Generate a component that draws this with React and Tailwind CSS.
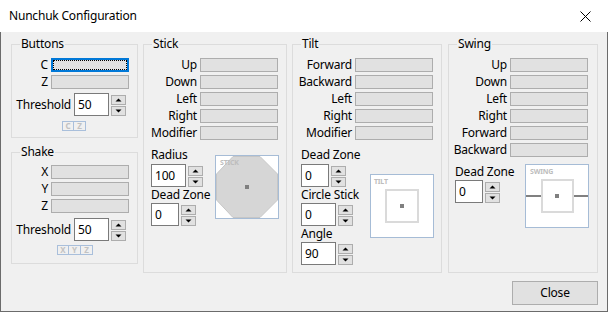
const font = "font-['Noto_Sans',_'DejaVu_Sans',_sans-serif]";

function Triangle({ down }) {
	return (
		<svg width="7" height="4" viewBox="0 0 7 4">
			<polygon points={down ? '0.5,0.5 6.5,0.5 3.5,3.5' : '0.5,3.5 6.5,3.5 3.5,0.5'} fill="#000" />
		</svg>
	);
}

function SpinBox({ value, width }) {
	return (
		<div className="flex items-center">
			<div className={`${width} h-[23px] border border-[#7a7a7a] bg-white pl-[3px] flex items-center`}>{value}</div>
			<div className="ml-[2px] mt-[1px] flex flex-col gap-[1px]">
				<div className="w-[15px] h-[10px] border border-[#adadad] bg-[#e1e1e1] flex items-center justify-center">
					<Triangle />
				</div>
				<div className="w-[15px] h-[10px] border border-[#adadad] bg-[#e1e1e1] flex items-center justify-center">
					<Triangle down />
				</div>
			</div>
		</div>
	);
}

function MapRow({ label, labelWidth, focused }) {
	return (
		<div className="flex items-center h-[14px]">
			<span className={`${labelWidth} text-right whitespace-nowrap`}>{label}</span>
			{focused ? (
				<div className="ml-[3px] w-[78px] h-[14px] border-2 border-[#0078d7] bg-[#e1e1e1]">
					<div className="w-full h-full border border-dotted border-black" />
				</div>
			) : (
				<div className="ml-[3px] w-[78px] h-[14px] border border-[#adadad] bg-[#e1e1e1]" />
			)}
		</div>
	);
}

function Indicator({ letters, offset }) {
	return (
		<div className={`flex tracking-normal ${offset}`}>
			{letters.map((l, i) => (
				<div
					key={l}
					className={`w-[12px] h-[10px] border border-[#a9bfdb] flex items-center justify-center text-[8px] leading-[8px] font-bold text-[#c2c2c2] ${i > 0 ? 'border-l-0' : ''}`}
				>
					{l}
				</div>
			))}
		</div>
	);
}

function Group({ title, className, children }) {
	return (
		<fieldset className={`border border-[#dcdcdc] ${className}`}>
			<legend className="ml-[8px] px-[1px] leading-[16px]">{title}</legend>
			{children}
		</fieldset>
	);
}

function Canvas({ children }) {
	return (
		<div className="w-[64px] h-[64px] border border-[#a6bcd6] bg-white">
			<svg width="62" height="62" viewBox="0 0 62 62">
				{children}
			</svg>
		</div>
	);
}

const canvasLabel = { fontFamily: 'Noto Sans, DejaVu Sans, sans-serif', fontSize: 7, fontWeight: 700, fill: '#bdbdbd' };

export default function App() {
	const stickRows = ['Up', 'Down', 'Left', 'Right', 'Modifier'];
	const tiltRows = ['Forward', 'Backward', 'Left', 'Right', 'Modifier'];
	const swingRows = ['Up', 'Down', 'Left', 'Right', 'Forward', 'Backward'];

	return (
		<div className={`w-[608px] h-[312px] flex flex-col text-[12px] leading-[16px] tracking-[-0.2px] text-black ${font}`}>
			{/* Title bar */}
			<div className="h-[32px] bg-white flex items-center pl-[9px]">
				<span>Nunchuk Configuration</span>
				<div className="ml-auto w-[46px] h-[32px] flex items-center justify-center">
					<svg width="11" height="11" viewBox="0 0 11 11">
						<path d="M0.5 0.5 L10.5 10.5 M10.5 0.5 L0.5 10.5" stroke="#000" strokeWidth="1" />
					</svg>
				</div>
			</div>

			{/* Body */}
			<div className="h-[280px] bg-[#f0f0f0] border-x border-b border-[#6b6b6b] pt-[4px] pl-[10px] flex flex-col">
				<div className="flex">
					{/* Left column */}
					<div className="w-[127px] flex flex-col gap-[6px]">
						<Group title="Buttons" className="h-[102px]">
							<div className="mt-[6px] flex flex-col gap-[3px]">
								<MapRow label="C" labelWidth="w-[36px]" focused />
								<MapRow label="Z" labelWidth="w-[36px]" />
							</div>
							<div className="mt-[4px] flex items-center">
								<span className="w-[59px] text-right">Threshold</span>
								<div className="ml-[3px]">
									<SpinBox value="50" width="w-[35px]" />
								</div>
							</div>
							<div className="mt-[5px]">
								<Indicator letters={['C', 'Z']} offset="ml-[50px]" />
							</div>
						</Group>
						<Group title="Shake" className="h-[120px]">
							<div className="mt-[5px] flex flex-col gap-[3px]">
								<MapRow label="X" labelWidth="w-[36px]" />
								<MapRow label="Y" labelWidth="w-[36px]" />
								<MapRow label="Z" labelWidth="w-[36px]" />
							</div>
							<div className="mt-[5px] flex items-center">
								<span className="w-[59px] text-right">Threshold</span>
								<div className="ml-[3px]">
									<SpinBox value="50" width="w-[35px]" />
								</div>
							</div>
							<div className="mt-[4px]">
								<Indicator letters={['X', 'Y', 'Z']} offset="ml-[45px]" />
							</div>
						</Group>
					</div>

					{/* Stick */}
					<Group title="Stick" className="ml-[5px] w-[144px] h-[237px]">
						<div className="mt-[6px] flex flex-col gap-[3px]">
							{stickRows.map((r) => (
								<MapRow key={r} label={r} labelWidth="w-[53px]" />
							))}
						</div>
						<div className="mt-[7px] pl-[7px] flex">
							<div className="w-[64px] flex flex-col">
								<span>Radius</span>
								<div className="mt-[1px]">
									<SpinBox value="100" width="w-[35px]" />
								</div>
								<span className="whitespace-nowrap">Dead Zone</span>
								<SpinBox value="0" width="w-[28px]" />
							</div>
							<div className="mt-[8px]">
								<Canvas>
									<polygon
										points="17,0.5 44,0.5 61.5,18 61.5,44 44,61.5 17,61.5 0.5,44 0.5,18"
										fill="#d6d6d6"
										stroke="#c6c6c6"
									/>
									<text x="4" y="9" style={canvasLabel}>STICK</text>
									<rect x="29" y="29" width="4" height="4" fill="#808080" />
								</Canvas>
							</div>
						</div>
					</Group>

					{/* Tilt */}
					<Group title="Tilt" className="ml-[5px] w-[150px] h-[237px]">
						<div className="mt-[6px] flex flex-col gap-[3px]">
							{tiltRows.map((r) => (
								<MapRow key={r} label={r} labelWidth="w-[59px]" />
							))}
						</div>
						<div className="mt-[7px] pl-[8px] flex">
							<div className="w-[69px] flex flex-col">
								<span>Dead Zone</span>
								<div className="mt-[1px]">
									<SpinBox value="0" width="w-[28px]" />
								</div>
								<span className="whitespace-nowrap">Circle Stick</span>
								<SpinBox value="0" width="w-[35px]" />
								<span>Angle</span>
								<SpinBox value="90" width="w-[35px]" />
							</div>
							<div className="mt-[27px]">
								<Canvas>
									<text x="3" y="9" style={canvasLabel}>TILT</text>
									<rect x="15" y="15" width="32" height="32" fill="#fff" stroke="#dadada" strokeWidth="2" />
									<rect x="29" y="29" width="4" height="4" fill="#808080" />
								</Canvas>
							</div>
						</div>
					</Group>

					{/* Swing */}
					<Group title="Swing" className="ml-[6px] w-[150px] h-[237px]">
						<div className="mt-[6px] flex flex-col gap-[3px]">
							{swingRows.map((r) => (
								<MapRow key={r} label={r} labelWidth="w-[58px]" />
							))}
						</div>
						<div className="mt-[7px] pl-[6px] flex">
							<div className="w-[70px] flex flex-col">
								<span className="whitespace-nowrap">Dead Zone</span>
								<SpinBox value="0" width="w-[28px]" />
							</div>
							<Canvas>
								<text x="4" y="9" style={canvasLabel}>SWING</text>
								<path d="M0 31 H15 M47 31 H62" stroke="#808080" strokeWidth="2" />
								<rect x="16" y="15" width="31" height="32" fill="#fff" stroke="#dadada" strokeWidth="2" />
								<rect x="29" y="29" width="4" height="4" fill="#808080" />
							</Canvas>
						</div>
					</Group>
				</div>

				{/* Close */}
				<div className="mt-[8px] flex justify-end pr-[9px]">
					<button className="w-[86px] h-[24px] border border-[#adadad] bg-[#e1e1e1] flex items-center justify-center">
						Close
					</button>
				</div>
			</div>
		</div>
	);
}
